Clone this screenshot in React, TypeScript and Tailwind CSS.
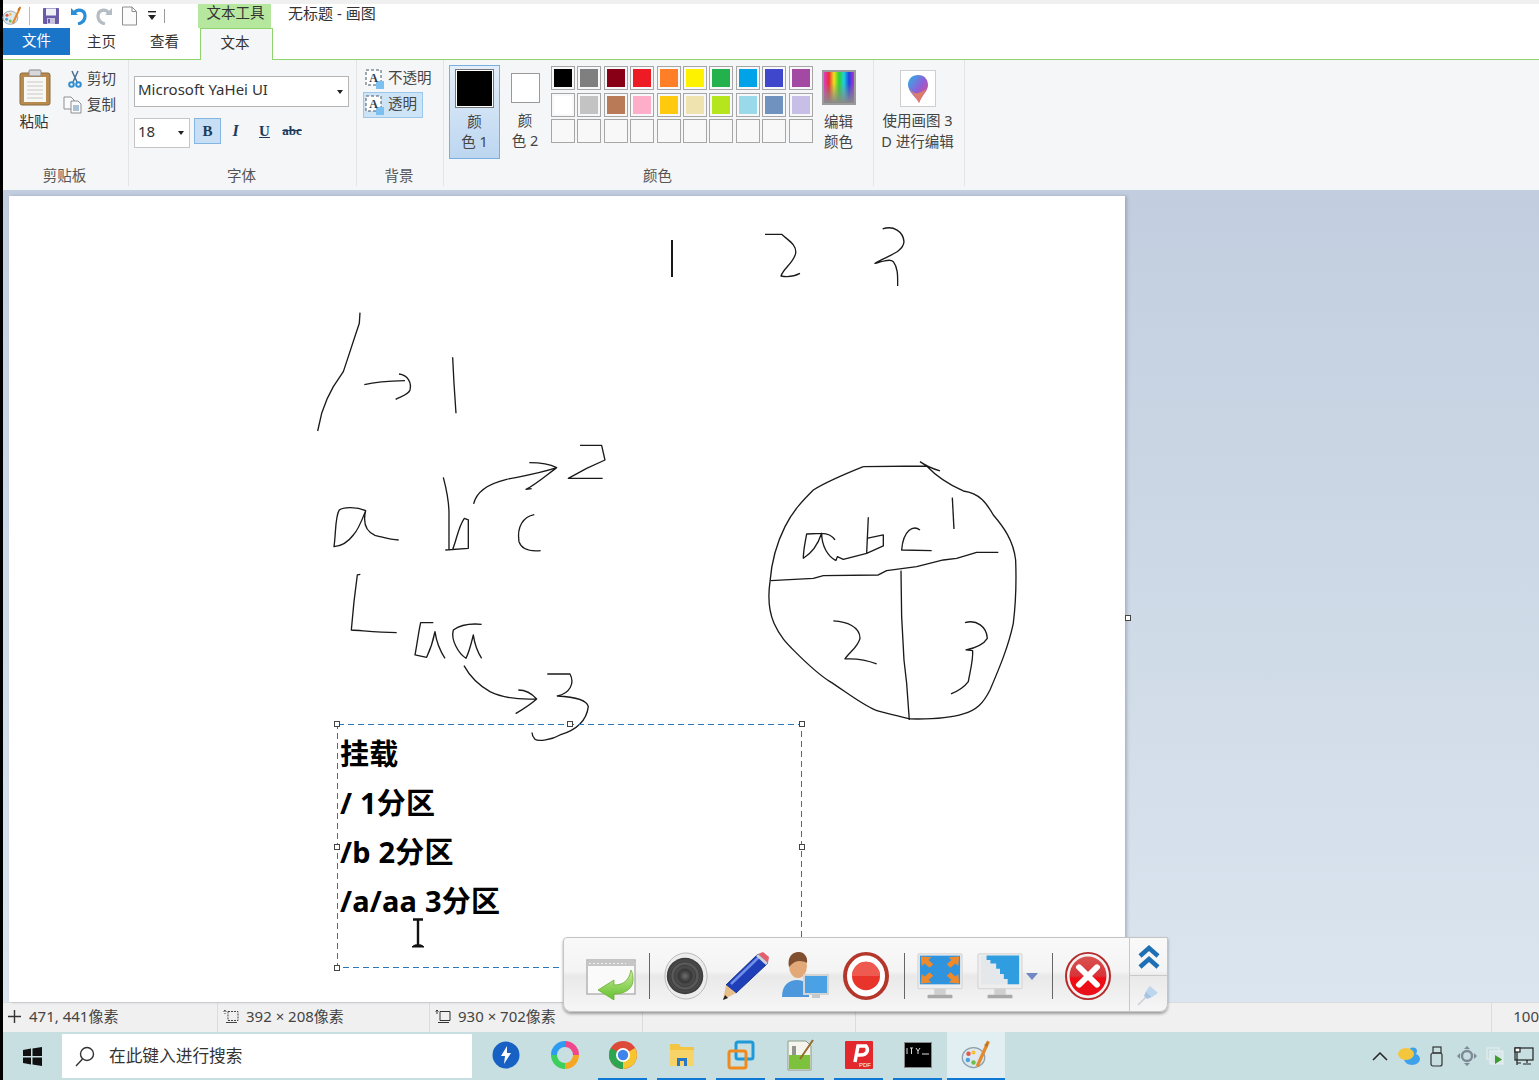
import type { ReactNode } from "react";

const swatches = [
  "#000000", "#7f7f7f", "#880015", "#ed1c24", "#ff7f27", "#fff200", "#22b14c", "#00a2e8", "#3f48cc", "#a349a4",
  "#ffffff", "#c3c3c3", "#b97a57", "#ffaec9", "#ffc90e", "#efe4b0", "#b5e61d", "#99d9ea", "#7092be", "#c8bfe7",
  "", "", "", "", "", "", "", "", "", "",
];

const Group = ({ label, width, children }: { label: string; width: string; children: ReactNode }) => (
  <div className={`flex h-full flex-col border-r border-[#e3e4e6] ${width}`}>
    <div className="flex-1">{children}</div>
    <div className="h-[26px] pr-[2px] text-center text-[14.5px] leading-[30px] text-[#555]">{label}</div>
  </div>
);

const PaintIcon = ({ size = 20 }: { size?: number }) => (
  <svg width={size} height={size} viewBox="0 0 24 24">
    <ellipse cx="10" cy="14" rx="9" ry="8" fill="#dfe8ee" stroke="#8da0ad" />
    <circle cx="6" cy="11" r="1.8" fill="#e2574c" />
    <circle cx="5.5" cy="16" r="1.8" fill="#4aa3df" />
    <circle cx="10" cy="18" r="1.8" fill="#6cbf4b" />
    <circle cx="10" cy="10" r="1.6" fill="#f2c037" />
    <path d="M22 1 L13 21" stroke="#e58a2c" strokeWidth="2.6" />
    <path d="M22 1 L18.5 4 L21 6 Z" fill="#b8752a" />
  </svg>
);

const TitleBar = () => (
  <div className="flex h-6 items-center bg-white">
    <div className="ml-[-1px] w-[22px]"><PaintIcon /></div>
    <div className="ml-[5px] h-[18px] w-px bg-[#bbb]" />
    <svg className="ml-[12px]" width="18" height="18" viewBox="0 0 18 18">
      <rect x="1" y="1" width="16" height="16" rx="1" fill="#6a5aa8" />
      <rect x="4" y="1.5" width="10" height="7" fill="#eef0f6" />
      <rect x="5" y="11" width="8" height="6" fill="#c7c3de" />
      <rect x="6" y="12" width="2" height="4" fill="#6a5aa8" />
    </svg>
    <svg className="ml-[9px]" width="18" height="18" viewBox="0 0 18 18" fill="none">
      <path d="M2 1 L2 8 L9 8 Z" fill="#2b8ed8" />
      <path d="M5 6 C9 1 16 3 16 9 C16 13 13 16 9 17" stroke="#2b8ed8" strokeWidth="3.2" />
    </svg>
    <svg className="ml-[9px]" width="18" height="18" viewBox="0 0 18 18" fill="none">
      <path d="M16 1 L16 8 L9 8 Z" fill="#b4bcc4" />
      <path d="M13 6 C9 1 2 3 2 9 C2 13 5 16 9 17" stroke="#b4bcc4" strokeWidth="3.2" />
    </svg>
    <svg className="ml-[7px]" width="17" height="20" viewBox="0 0 17 20" fill="#fbfbfb" stroke="#8f8f8f">
      <path d="M1.5 1 H11 L15.5 5.5 V19 H1.5 Z" />
      <path d="M11 1 V5.5 H15.5" fill="none" />
    </svg>
    <svg className="ml-[9px]" width="10" height="12" viewBox="0 0 10 12" fill="#222">
      <rect x="1" y="1" width="8" height="1.4" />
      <path d="M1 5 H9 L5 10 Z" />
    </svg>
    <div className="ml-[7px] h-[14px] w-px bg-[#999]" />
    <div className="ml-[33px] flex h-6 w-[73px] items-center justify-center bg-[#b6e79f] pb-[7px] pl-[2px] text-[14.5px] leading-none text-[#333]">
      文本工具
    </div>
    <span className="mb-[5px] ml-[17px] text-[15px] leading-none text-[#333]">无标题 - 画图</span>
  </div>
);

const Tabs = () => (
  <div className="flex h-8 border-b border-[#8ed46f] bg-white text-[14.5px] text-[#333]">
    <div className="flex h-[27px] w-[67px] items-center justify-center bg-[#1a75c9] pb-[1px] text-white">文件</div>
    <div className="flex h-[30px] w-[65px] items-center pb-[3px] pl-[17px]">主页</div>
    <div className="flex h-[30px] w-[65px] items-center pb-[3px] pl-[15px]">查看</div>
    <div className="relative z-10 flex h-8 w-[73px] items-center justify-center border-x border-t border-[#8ed46f] bg-[#f5f6f7] pb-[3px] pr-[3px]">文本</div>
  </div>
);

const ClipboardGroup = () => (
  <Group label="剪贴板" width="w-[126px]">
    <div className="flex pt-[9px]">
      <div className="flex w-[64px] flex-col items-center">
        <svg width="32" height="37" viewBox="0 0 32 37">
          <rect x="1" y="4" width="30" height="32" rx="2" fill="#b98a4e" stroke="#8a6a3e" />
          <rect x="5" y="8" width="22" height="25" fill="#f7f7f4" />
          <path d="M8 13 H24 M8 17 H24 M8 21 H24 M8 25 H24 M8 29 H24" stroke="#c9c9c9" />
          <rect x="10" y="1" width="12" height="6" rx="1" fill="#d9d9d9" stroke="#888" />
        </svg>
        <span className="mt-[5px] pr-[2px] text-[14.5px] leading-[20px] text-[#333]">粘贴</span>
      </div>
      <div className="-mt-[3px] flex flex-col text-[14.5px] text-[#444]">
        <div className="flex h-[26px] items-center gap-[4px]">
          <svg width="16" height="18" viewBox="0 0 16 18" fill="none" stroke="#4a6f92" strokeWidth="1.5">
            <path d="M5 1 L10 12 M11 1 L6 12" />
            <circle cx="4.5" cy="14.5" r="2.3" stroke="#2f8fd0" strokeWidth="2" />
            <circle cx="11.5" cy="14.5" r="2.3" stroke="#2f8fd0" strokeWidth="2" />
          </svg>
          <span>剪切</span>
        </div>
        <div className="ml-[-4px] flex h-[26px] items-center gap-[4px]">
          <svg width="20" height="18" viewBox="0 0 20 18" fill="#fafafa" stroke="#8b8f95">
            <path d="M1 1 H8 L11 4 V13 H1 Z" />
            <path d="M8 5 H15 L18 8 V17 H8 Z" />
            <path d="M10 10 H16 M10 12 H16 M10 14 H16" stroke="#5c87ad" />
          </svg>
          <span>复制</span>
        </div>
      </div>
    </div>
  </Group>
);

const FontGroup = () => (
  <Group label="字体" width="w-[228px]">
    <div className="pl-[5px] pt-[16px]">
      <div className="flex h-[31px] w-[215px] items-center justify-between border border-[#b5b5b5] bg-white pb-[5px] pl-[3px] pr-[5px] text-[15px] text-[#333]">
        <span>Microsoft YaHei UI</span>
        <span className="mt-[5px] h-0 w-0 border-x-[3px] border-t-[4px] border-x-transparent border-t-[#222]" />
      </div>
      <div className="mt-[11px] flex items-start">
        <div className="flex h-[30px] w-[56px] items-center justify-between border border-[#c5c5c5] bg-white pb-[4px] pl-[3px] pr-[5px] text-[15px] text-[#333]">
          <span>18</span>
          <span className="mt-[4px] h-0 w-0 border-x-[3px] border-t-[4px] border-x-transparent border-t-[#222]" />
        </div>
        <div className="ml-[4px] flex h-[26px] w-[27px] items-center justify-center border border-[#84b5e3] bg-[#c8def4] font-['Liberation_Serif',serif] text-[15px] font-bold text-[#1b3a5c]">B</div>
        <div className="flex h-[26px] w-[29px] items-center justify-center font-['Liberation_Serif',serif] text-[16px] font-bold italic text-[#1b3a5c]">I</div>
        <div className="flex h-[26px] w-[29px] items-center justify-center font-['Liberation_Serif',serif] text-[15px] font-bold text-[#1b3a5c] underline">U</div>
        <div className="flex h-[26px] w-[26px] items-center justify-center font-['Liberation_Serif',serif] text-[13px] font-bold text-[#1b3a5c] line-through">abc</div>
      </div>
    </div>
  </Group>
);

const TextBoxIcon = () => (
  <svg width="20" height="21" viewBox="0 0 20 21">
    <rect x="1" y="1" width="15" height="15" fill="#fff" stroke="#42566b" strokeDasharray="3 2" />
    <rect x="11" y="12" width="8" height="8" fill="#7cc0f0" />
    <text x="8.5" y="13" fontSize="12" fontWeight="700" textAnchor="middle" fill="#2e3e50" fontFamily="Liberation Serif">A</text>
  </svg>
);

const BackgroundGroup = () => (
  <Group label="背景" width="w-[87px]">
    <div className="pl-[6px] pt-[7px] text-[14.5px] text-[#444]">
      <div className="flex h-[24px] items-center gap-[3px] pl-[2px]">
        <TextBoxIcon />
        <span className="-mt-[3px]">不透明</span>
      </div>
      <div className="mt-[1px] flex h-[26px] w-[60px] items-center gap-[3px] border border-[#9cc7ea] bg-[#cde4f7] pl-[1px]">
        <TextBoxIcon />
        <span className="-mt-[3px]">透明</span>
      </div>
    </div>
  </Group>
);

const ColorsGroup = () => (
  <Group label="颜色" width="w-[430px]">
    <div className="flex pl-[5px] pt-[5px]">
      <div className="flex h-[94px] w-[51px] flex-col items-center border border-[#79aee0] bg-gradient-to-b from-[#e3eefa] to-[#bcd6f0] pt-[3px] text-[14.5px] leading-[20px] text-[#444]">
        <div className="h-[39px] w-[39px] border border-[#777] bg-black shadow-[inset_0_0_0_1px_#fff]" />
        <div className="mt-[3px] text-center">颜<br />色 1</div>
      </div>
      <div className="flex w-[50px] flex-col items-center pt-[8px] text-[14.5px] leading-[20px] text-[#444]">
        <div className="h-[30px] w-[29px] border border-[#999] bg-white" />
        <div className="mt-[7px] text-center">颜<br />色 2</div>
      </div>
      <div className="ml-[1px] grid h-fit grid-cols-[repeat(10,24px)] gap-x-[2.4px] gap-y-[2.5px] pt-[1px]">
        {swatches.map((c, i) =>
          <div key={i} className="h-[24px] border border-[#a6a6a6] bg-[#f8f8f8] p-[2px]">
            {c && <div className="h-full w-full" style={{ backgroundColor: c }} />}
          </div>
        )}
      </div>
      <div className="ml-[9px] flex w-[34px] flex-col items-center pt-[5px] text-[14.5px] leading-[20px] text-[#444]">
        <div className="h-[35px] w-[34px] border-[2px] border-[#9b9b9b] bg-[linear-gradient(to_bottom,transparent_35%,#8a8a8a),linear-gradient(to_right,#e03cc8,#e83030,#f0e020,#30d030,#20d0e0,#2040e0,#c030d0)]" />
        <div className="mt-[6px] whitespace-nowrap text-center">编辑<br />颜色</div>
      </div>
    </div>
  </Group>
);

const Paint3dGroup = () => (
  <Group label="" width="w-[91px]">
    <div className="flex flex-col items-center pr-[3px] pt-[10px] text-[14.5px] leading-[21px] text-[#444]">
      <div className="flex h-[37px] w-[36px] items-center justify-center border border-[#cfcfcf] bg-white">
        <svg width="22" height="30" viewBox="0 0 22 30">
          <defs>
            <linearGradient id="p3d" x1="0" y1="0" x2="1" y2="1">
              <stop offset="0" stopColor="#25b7e8" />
              <stop offset="0.5" stopColor="#8e5fd8" />
              <stop offset="1" stopColor="#f0486a" />
            </linearGradient>
          </defs>
          <path d="M11 1 C18 1 21 6 21 11 C21 17 15 21 12 29 C10 24 1 18 1 11 C1 5 5 1 11 1 Z" fill="url(#p3d)" />
          <path d="M3 15 C7 21 13 20 19 15 C17 21 14 23 12 29 C10 24 5 21 3 15 Z" fill="#f08a4a" opacity="0.7" />
        </svg>
      </div>
      <div className="mt-[3px] whitespace-nowrap text-center">使用画图 3<br />D 进行编辑</div>
    </div>
  </Group>
);

// freehand strokes, traced in 3x crop coordinates
const Sketch = () => (
  <svg className="absolute inset-0" width="1116" height="806" viewBox="9 196 1116 806" fill="none" stroke="#1a1a1a" strokeLinejoin="round">
    <path d="M672 240 L672 277" strokeWidth="2" />
    <g transform="translate(300 300) scale(0.3333)" strokeWidth="4">
      <path d="M180 38 L178 70 L163 115 L145 170 L130 215 L100 260 L82 295 L65 340 L53 393" />
      <path d="M193 254 C230 245 270 243 315 242 M297 222 C325 225 335 250 330 270 C325 285 300 290 287 298" />
      <path d="M458 172 L462 250 L468 340" />
      <path d="M197 632 C170 620 130 620 118 630 C105 650 108 700 102 740 C125 738 145 725 160 705 C175 690 190 650 197 632 C188 670 200 695 225 706 C250 712 270 720 296 720" />
      <path d="M430 532 C440 570 447 600 447 640 L447 748 M436 750 L505 745 L505 660 L493 655 C475 680 470 720 458 748" />
      <path d="M521 612 C530 570 570 550 620 538 C670 528 720 520 770 503 C745 490 715 488 688 488 M770 503 C740 525 705 555 678 568 L695 566" />
      <path d="M840 436 L905 436 L915 480 L860 505 L805 535 L908 535" />
      <path d="M703 644 C670 650 650 680 657 725 C665 750 690 755 722 752" />
      <path d="M181 823 L172 825 L162 905 L154 990 C190 992 230 998 290 998" />
      <path d="M400 968 L362 968 C355 1000 350 1040 345 1065 L380 1072 C395 1040 400 1020 405 995 C410 1030 425 1060 435 1075" />
      <path d="M545 973 C510 970 480 975 460 990 C452 1020 475 1060 498 1075 C510 1050 515 1025 520 1005 C525 1040 535 1060 545 1075" />
      <path d="M492 1097 C510 1130 535 1155 570 1175 C600 1190 640 1200 710 1197 C695 1180 675 1170 655 1170 M710 1197 C690 1215 665 1230 647 1241" />
      <path d="M742 1122 L810 1122 C825 1150 810 1180 772 1188 C810 1190 860 1195 865 1220 C860 1260 830 1290 780 1305 C755 1320 715 1325 705 1318 C698 1310 696 1305 696 1298" />
    </g>
    <g transform="translate(750 210) scale(0.3333)" strokeWidth="4">
      <path d="M45 73 L95 73 C120 95 140 105 137 130 C130 160 100 175 93 198 C115 202 135 198 150 190" />
      <path d="M398 57 C430 45 460 65 462 95 C460 125 420 135 375 160 C395 155 420 145 430 155 C445 175 443 200 443 228" />
      <path d="M510 755 C530 770 545 775 570 783 M340 770 L530 768 C560 800 600 825 640 843 C690 850 710 880 730 915 C760 950 790 990 797 1050 C800 1130 795 1200 790 1240 C775 1310 750 1370 720 1440 C700 1480 680 1500 640 1512 C590 1528 530 1528 480 1527 C440 1515 400 1510 375 1500 C330 1480 280 1440 240 1415 C200 1390 160 1350 135 1325 C110 1300 90 1280 72 1240 C55 1200 55 1150 60 1115 C65 1050 80 1000 105 950 C130 900 160 870 190 840 C230 815 290 790 340 770" />
      <path d="M62 1112 L190 1105 L220 1097 L385 1095 L410 1082 L500 1070 L580 1050 L620 1045 L680 1027 L745 1027" />
      <path d="M453 1082 L455 1220 L462 1350 L470 1420 L478 1530" />
      <path d="M607 863 L612 957" />
      <path d="M215 970 L170 972 C165 1000 160 1020 160 1045 C185 1030 205 1000 215 970 C215 1010 235 1040 258 1052 M255 990 C245 975 230 970 215 970 M258 1052 L262 1040 L280 1048 L350 1030" />
      <path d="M355 922 L350 1030 L400 1008 L400 975 L350 985" />
      <path d="M510 960 C490 945 460 960 455 1020 L545 1022" />
      <path d="M250 1233 C290 1235 330 1250 330 1285 C325 1310 295 1330 285 1347 C320 1345 350 1350 380 1362" />
      <path d="M645 1238 C680 1228 710 1250 712 1285 C700 1305 670 1315 648 1320 L668 1322 C670 1350 660 1385 655 1415 C640 1435 620 1445 603 1452" />
    </g>
  </svg>
);

const Handle = ({ className }: { className: string }) => (
  <div className={`absolute h-[6px] w-[6px] border border-[#444] bg-white ${className}`} />
);

const TextBox = () => (
  <div className="absolute left-[328px] top-[528px] h-[244px] w-[465px] pl-[3px] pt-[5px] font-['Noto_Sans','Noto_Sans_CJK_SC',sans-serif] text-[29px] font-bold leading-[49px] tracking-[0.2px] text-black">
    {/* marquee with the long dashes of Paint */}
    <svg className="absolute inset-0" width="465" height="244" fill="none" stroke="#2a78b8" strokeWidth="1" strokeDasharray="6 4" shapeRendering="crispEdges">
      <rect x="0.5" y="0.5" width="464" height="243" />
    </svg>
    <div>挂载</div>
    <div>/ 1分区</div>
    <div>/b 2分区</div>
    <div>/a/aa 3分区</div>
    <Handle className="-left-[3px] -top-[3px]" />
    <Handle className="left-[230px] -top-[3px]" />
    <Handle className="-right-[3px] -top-[3px]" />
    <Handle className="-left-[3px] top-[120px]" />
    <Handle className="-right-[3px] top-[120px]" />
    <Handle className="-left-[3px] -bottom-[3px]" />
  </div>
);

const Workspace = () => (
  <div className="flex flex-1 bg-gradient-to-b from-[#c2cedf] to-[#dbe5ef] pl-[6px] pt-[6px]">
    <div className="relative w-[1116px] bg-white shadow-[2px_0_3px_rgba(90,100,120,0.35)]">
      <Sketch />
      <TextBox />
      <Handle className="-right-[6px] top-[419px]" />
      {/* I-beam pointer */}
      <svg className="absolute left-[402px] top-[722px]" width="14" height="32" viewBox="0 0 14 32" fill="none" stroke="#111">
        <path d="M2 1.5 H12 M7 2 V27" strokeWidth="2.4" />
        <path d="M1 29 C4 26 6 27 7 27 C8 27 10 26 13 29 Z" fill="#111" />
      </svg>
    </div>
  </div>
);

const StatusBar = () => (
  <div className="flex h-[30px] items-center border-t border-[#dcdcdc] bg-[#f0f0f0] text-[15px] text-[#444]">
    <div className="flex h-full w-[215px] items-center gap-[8px] border-r border-[#dcdcdc] pb-[2px] pl-[5px]">
      <svg width="13" height="13" viewBox="0 0 13 13" stroke="#333" fill="none"><path d="M6.5 0 V13 M0 6.5 H13" strokeWidth="1.4" /></svg>
      <span>471, 441像素</span>
    </div>
    <div className="flex h-full w-[212px] items-center gap-[7px] border-r border-[#dcdcdc] pb-[2px] pl-[5px]">
      <svg width="16" height="15" viewBox="0 0 16 15" fill="none" stroke="#444">
        <path d="M2 1 V5 M0.5 2.5 L2 1 L3.5 2.5 M5 2.5 H15 V11.5 H5 Z" strokeDasharray="2 1" />
        <path d="M3 13.5 H14" />
      </svg>
      <span>392 × 208像素</span>
    </div>
    <div className="flex h-full w-[213px] items-center gap-[7px] border-r border-[#dcdcdc] pb-[2px] pl-[5px]">
      <svg width="16" height="15" viewBox="0 0 16 15" fill="none" stroke="#333">
        <path d="M2 1 V5 M0.5 2.5 L2 1 L3.5 2.5 M5 2.5 H15 V11.5 H5 Z" />
        <path d="M3 13.5 H14" />
      </svg>
      <span>930 × 702像素</span>
    </div>
    <div className="h-full w-[213px] border-r border-[#dcdcdc]" />
    <div className="h-full w-[636px] border-r border-[#dcdcdc]" />
    <div className="flex-1 whitespace-nowrap pb-[2px] text-right">100</div>
  </div>
);

const ToolSlot = ({ width, children }: { width: string; children: ReactNode }) => (
  <div className={`flex shrink-0 items-center justify-center ${width}`}>{children}</div>
);

const ToolSep = () => <div className="h-[46px] w-px bg-[#666]" />;

const Monitor = ({ children }: { children: ReactNode }) => (
  <svg width="46" height="47" viewBox="0 0 48 54" preserveAspectRatio="none">
    <rect x="1" y="1" width="46" height="40" rx="1" fill="#eeeeee" stroke="#d0d0d0" />
    {children}
    <rect x="18" y="41" width="12" height="7" fill="#cfcfcf" />
    <rect x="11" y="48" width="26" height="4" rx="1" fill="#a9a9a9" />
  </svg>
);

const FloatingToolbar = () => (
  <div className="absolute left-[563px] top-[937px] flex h-[75px] w-[605px] rounded-b-[8px] rounded-tl-[4px] border border-[#c4c4c4] bg-[linear-gradient(to_bottom,#f9f9f9_0%,#f4f4f4_45%,#e9e9e9_52%,#f6f6f6_100%)] shadow-[0_2px_3px_rgba(0,0,0,0.35)]">
    <div className="flex flex-1 items-center pl-[17px] pt-[3px]">
      <ToolSlot width="w-[60px]">
        <svg width="50" height="48" viewBox="0 0 50 48">
          <defs>
            <linearGradient id="back" x1="0" y1="0" x2="0" y2="1">
              <stop offset="0" stopColor="#c8ec9a" />
              <stop offset="1" stopColor="#62c02c" />
            </linearGradient>
          </defs>
          <rect x="1" y="8" width="48" height="34" fill="#fafafa" stroke="#b4b4b4" strokeWidth="1.5" />
          <rect x="2" y="9" width="46" height="5" fill="#c6c6c6" />
          <path d="M3 11.5 H40" stroke="#f2f2f2" strokeDasharray="2 2" />
          <path d="M28 28 L12 38 L28 48 L28 42 C40 42 48 36 47 26 C47 22 46 20 45 18 C43 28 38 33 28 33 Z" fill="url(#back)" stroke="#6fae3a" strokeWidth="0.8" />
        </svg>
      </ToolSlot>
      <div className="ml-[8px]"><ToolSep /></div>
      <ToolSlot width="w-[72px]">
        <svg width="46" height="48" viewBox="0 0 46 50">
          <defs>
            <radialGradient id="speaker">
              <stop offset="0" stopColor="#6e6e6e" />
              <stop offset="0.3" stopColor="#3c3c3c" />
              <stop offset="0.7" stopColor="#5a5a5a" />
              <stop offset="1" stopColor="#383838" />
            </radialGradient>
          </defs>
          <ellipse cx="23" cy="25" rx="22" ry="24" fill="#ececec" stroke="#b8b8b8" />
          <circle cx="22" cy="25" r="19" fill="url(#speaker)" />
          <g fill="none" stroke="#333" strokeWidth="0.7">
            <circle cx="22" cy="25" r="15" />
            <circle cx="22" cy="25" r="11" />
            <circle cx="22" cy="25" r="7" />
          </g>
        </svg>
      </ToolSlot>
      <ToolSlot width="w-[48px]">
        <svg width="48" height="50" viewBox="0 0 48 50">
          <path d="M36 3 L46 12 L14 42 L4 34 Z" fill="#1f3fb8" stroke="#16308e" />
          <path d="M37 6 L9 33" stroke="#6f8fe8" strokeWidth="2.5" />
          <path d="M36 3 L41 1 L47 6 L46 12 Z" fill="#e4606a" />
          <path d="M34 5 L44 14 L46 12 L36 3 Z" fill="#cfd3da" />
          <path d="M4 34 L14 42 L1 49 Z" fill="#e6c08a" />
          <path d="M1 49 L3 44 L6 47 Z" fill="#222" />
        </svg>
      </ToolSlot>
      <ToolSlot width="w-[70px]">
        <svg width="48" height="50" viewBox="0 0 48 50">
          <path d="M1 46 C1 34 8 29 16 29 C22 29 26 32 28 36 L28 46 Z" fill="#4d97dc" />
          <ellipse cx="17" cy="15" rx="9" ry="12" fill="#e2a878" />
          <path d="M8 16 C6 4 13 1 18 1 C24 1 27 7 26 12 C20 9 14 9 8 16 Z" fill="#7f4f30" />
          <rect x="23" y="24" width="24" height="19" fill="#4aa2e4" stroke="#d4d4d4" strokeWidth="2" />
          <rect x="31" y="43" width="8" height="4" fill="#c8c8c8" />
        </svg>
      </ToolSlot>
      <ToolSlot width="w-[52px]">
        <svg width="46" height="48" viewBox="0 0 46 54" preserveAspectRatio="none">
          <ellipse cx="23" cy="27" rx="21" ry="25" fill="#fff" stroke="#b5362b" strokeWidth="4" />
          <ellipse cx="23" cy="27" rx="14" ry="16" fill="#e8342a" />
          <path d="M9 27 A14 16 0 0 1 37 27 Z" fill="#ef5a50" />
        </svg>
      </ToolSlot>
      <div className="ml-[12px]"><ToolSep /></div>
      <ToolSlot width="w-[70px]">
        <Monitor>
          <rect x="3" y="3" width="42" height="33" fill="#2f93de" />
          <path d="M4 4 L15 5 L12 8 L17 13 L13 17 L8 12 L5 15 Z M44 4 L33 5 L36 8 L31 13 L35 17 L40 12 L43 15 Z M4 35 L15 34 L12 31 L17 26 L13 22 L8 27 L5 24 Z M44 35 L33 34 L36 31 L31 26 L35 22 L40 27 L43 24 Z" fill="#ee8a2c" />
        </Monitor>
      </ToolSlot>
      <ToolSlot width="w-[50px]">
        <Monitor>
          <rect x="4" y="3" width="40" height="33" fill="#e4e8ea" />
          <path d="M10 3 H44 V36 H32 L32 30 L28 30 L28 24 L24 24 L24 18 L20 18 L20 12 L14 12 L14 8 L10 8 Z" fill="#2f9de0" />
        </Monitor>
      </ToolSlot>
      <div className="ml-[1px] mr-[14px] h-0 w-0 border-x-[6px] border-t-[7px] border-x-transparent border-t-[#7186c4]" />
      <ToolSep />
      <ToolSlot width="w-[70px]">
        <svg width="46" height="48" viewBox="0 0 46 54" preserveAspectRatio="none">
          <defs>
            <linearGradient id="closeBtn" x1="0" y1="0" x2="0" y2="1">
              <stop offset="0" stopColor="#d9534f" />
              <stop offset="0.5" stopColor="#d8343a" />
              <stop offset="0.55" stopColor="#f20d14" />
              <stop offset="1" stopColor="#e8111a" />
            </linearGradient>
          </defs>
          <ellipse cx="23" cy="27" rx="22" ry="26" fill="#f2f2f2" stroke="#b52a2a" strokeWidth="2" />
          <ellipse cx="23" cy="27" rx="18.5" ry="22" fill="url(#closeBtn)" />
          <path d="M14 17 L32 37 M32 17 L14 37" stroke="#fff" strokeWidth="6" strokeLinecap="round" />
        </svg>
      </ToolSlot>
    </div>
    <div className="flex w-[38px] flex-col border-l border-[#c9c9c9]">
      <div className="flex h-[38px] items-center justify-center border-b border-[#c9c9c9]">
        <svg width="24" height="26" viewBox="0 0 24 26" fill="none" stroke="#1f6fb4" strokeWidth="4.5">
          <path d="M3 12 L12 4 L21 12 M3 23 L12 15 L21 23" />
        </svg>
      </div>
      <div className="flex flex-1 items-center justify-center">
        <svg width="24" height="24" viewBox="0 0 24 24">
          <path d="M1 23 L9 15" stroke="#c9ced6" strokeWidth="1.5" />
          <path d="M9 9 L15 15 L10 17 L7 14 Z" fill="#a8c6e4" />
          <path d="M13 4 L21 11 L15 15 L9 9 Z" fill="#bcd6ee" />
        </svg>
      </div>
    </div>
  </div>
);

const TaskIcon = ({ open = true, active = false, children }: { open?: boolean; active?: boolean; children: ReactNode }) => (
  <div className={`relative flex h-full items-center justify-center pb-[3px] ${active ? "w-[58px] bg-[#e1eff2]" : "w-[59px]"}`}>
    {children}
    {open && <div className={`absolute bottom-0 h-[2px] bg-[#0f78d4] ${active ? "inset-x-0" : "inset-x-[5px]"}`} />}
  </div>
);

const Taskbar = () => (
  <div className="flex h-12 items-center bg-[#c8dfe2]">
    <div className="flex h-full w-[59px] items-center justify-center">
      <svg width="19" height="19" viewBox="0 0 19 19" fill="#111">
        <path d="M0 3 L8 1.6 V9 H0 Z M9.5 1.4 L19 0 V9 H9.5 Z M0 10.5 H8 V17.4 L0 16 Z M9.5 10.5 H19 V19 L9.5 17.6 Z" />
      </svg>
    </div>
    <div className="flex h-[44px] w-[410px] items-center gap-[14px] bg-white pl-[13px] text-[16.7px] text-[#333]">
      <svg width="20" height="21" viewBox="0 0 20 21" fill="none" stroke="#333" strokeWidth="1.4">
        <circle cx="12" cy="8" r="6.5" />
        <path d="M7.5 13 L1 20" />
      </svg>
      <span>在此键入进行搜索</span>
    </div>
    <div className="flex h-full pl-[4px]">
      <TaskIcon open={false}>
        <svg width="28" height="28" viewBox="0 0 28 28">
          <circle cx="14" cy="14" r="13.5" fill="#1760c4" />
          <path d="M15 5 L9 15 L13 15 L12 23 L19 12 L15 12 Z" fill="#fff" />
        </svg>
      </TaskIcon>
      <div className="-mr-[1px]">
        <TaskIcon open={false}>
          <svg width="30" height="30" viewBox="0 0 30 30" fill="none" strokeWidth="6">
            <path d="M15 4 A11 11 0 0 1 26 15" stroke="#f0468c" />
            <path d="M26 15 A11 11 0 0 1 15 26" stroke="#f5a623" />
            <path d="M15 26 A11 11 0 0 1 4 15" stroke="#3ccf5e" />
            <path d="M4 15 A11 11 0 0 1 15 4" stroke="#2d9cf0" />
          </svg>
        </TaskIcon>
      </div>
      <TaskIcon>
        <svg width="30" height="30" viewBox="0 0 30 30">
          <circle cx="15" cy="15" r="14" fill="#de4a3a" />
          <path d="M15 15 L27.1 8 A14 14 0 0 1 15 29 Z" fill="#f7c62f" />
          <path d="M15 15 L15 29 A14 14 0 0 1 2.9 8 Z" fill="#2ea64f" />
          <circle cx="15" cy="15" r="7" fill="#fff" />
          <circle cx="15" cy="15" r="5.2" fill="#3f83ec" />
        </svg>
      </TaskIcon>
      <TaskIcon>
        <svg width="26" height="26" viewBox="0 0 26 26">
          <path d="M1 2 H10 L12 5 H25 V24 H1 Z" fill="#f4c542" />
          <rect x="1" y="8" width="24" height="16" fill="#f8d468" />
          <path d="M8 24 V16 H18 V24 H15 V19 H11 V24 Z" fill="#2a78c4" />
        </svg>
      </TaskIcon>
      <TaskIcon>
        <svg width="30" height="30" viewBox="0 0 30 30" fill="none" strokeWidth="3">
          <rect x="10" y="2" width="17" height="17" rx="2" stroke="#1f9ad8" />
          <rect x="3" y="11" width="17" height="17" rx="2" stroke="#ee8a1e" />
        </svg>
      </TaskIcon>
      <TaskIcon>
        <svg width="28" height="32" viewBox="0 0 28 32">
          <path d="M2 2 H20 L25 7 V31 H2 Z" fill="#f4f6ee" stroke="#8f9a86" />
          <rect x="3" y="16" width="21" height="14" fill="#7cc23c" />
          <path d="M7 7 V16 M9 7 V16" stroke="#333" />
          <path d="M27 1 L14 20" stroke="#9a6a2c" strokeWidth="2" />
        </svg>
      </TaskIcon>
      <TaskIcon>
        <svg width="30" height="30" viewBox="0 0 30 30">
          <rect x="1" y="1" width="28" height="28" rx="1" fill="#e2282c" />
          <path d="M11 22 L14 6 H22 C25 10 23 15 17 15 H12" fill="none" stroke="#fff" strokeWidth="3.5" />
          <text x="27" y="27" fontSize="6" fill="#fff" textAnchor="end" fontFamily="Liberation Sans">PDF</text>
        </svg>
      </TaskIcon>
      <TaskIcon>
        <div className="flex h-[26px] w-[28px] items-start bg-black px-[2px] pt-[4px] shadow-[0_0_0_1px_#888_inset]">
          <svg width="24" height="10" viewBox="0 0 24 10" stroke="#ddd" fill="none">
            <path d="M1 2 V8 M4 2 H7 M5.5 2 V8 M10 2 L12 5 V8 M14 2 L12 5 M16 8 H23" />
          </svg>
        </div>
      </TaskIcon>
      <TaskIcon active><PaintIcon size={30} /></TaskIcon>
    </div>
    <div className="ml-auto flex h-full items-center">
      <svg width="16" height="10" viewBox="0 0 16 10" fill="none" stroke="#222" strokeWidth="1.5"><path d="M1 9 L8 2 L15 9" /></svg>
      <svg className="ml-[10px]" width="22" height="20" viewBox="0 0 22 20">
        <ellipse cx="14" cy="13" rx="8" ry="6" fill="#3ea2ea" />
        <ellipse cx="15" cy="5" rx="4" ry="3.5" fill="#3ea2ea" />
        <ellipse cx="8" cy="8" rx="8" ry="6" fill="#f4c63e" />
      </svg>
      <svg className="ml-[10px]" width="15" height="21" viewBox="0 0 15 21" fill="none" stroke="#333" strokeWidth="1.2">
        <rect x="3" y="1" width="8" height="6" />
        <rect x="1" y="7" width="11" height="13" rx="2" />
      </svg>
      <svg className="ml-[12px]" width="20" height="20" viewBox="0 0 20 20" fill="#7c8a96">
        <path d="M10 0 L13 3 H7 Z M10 20 L7 17 H13 Z M0 10 L3 7 V13 Z M20 10 L17 13 V7 Z" />
        <circle cx="10" cy="10" r="5" fill="none" stroke="#7c8a96" strokeWidth="2.4" />
      </svg>
      <svg className="ml-[9px]" width="18" height="18" viewBox="0 0 18 18" fill="none" stroke="#e8f0f2">
        <rect x="1" y="1" width="12" height="11" />
        <rect x="4" y="4" width="13" height="13" fill="#d8e8ea" />
        <path d="M9 8 L16 12.5 L9 17 Z" fill="#3f9c2c" stroke="none" />
      </svg>
      <svg className="ml-[10px] mr-[5px]" width="20" height="19" viewBox="0 0 20 19" fill="none" stroke="#222" strokeWidth="1.2">
        <rect x="1" y="1" width="18" height="12" />
        <rect x="1" y="1" width="5" height="4" fill="#fff" />
        <path d="M3 5 V18 M3 16 H7 M13 13 V16 M9 17 H17" />
      </svg>
    </div>
  </div>
);

export default function App() {
  return (
    <div className="relative flex h-[1080px] w-[1539px] flex-col overflow-hidden bg-black pl-[3px] font-['Noto_Sans','Noto_Sans_CJK_SC',sans-serif]">
      <div className="h-1 bg-[#f0f0f0]" />
      <TitleBar />
      <Tabs />
      <div className="flex h-[130px] bg-[#f5f6f7] pb-[4px]">
        <ClipboardGroup />
        <FontGroup />
        <BackgroundGroup />
        <ColorsGroup />
        <Paint3dGroup />
      </div>
      <Workspace />
      <StatusBar />
      <Taskbar />
      <FloatingToolbar />
    </div>
  );
}
